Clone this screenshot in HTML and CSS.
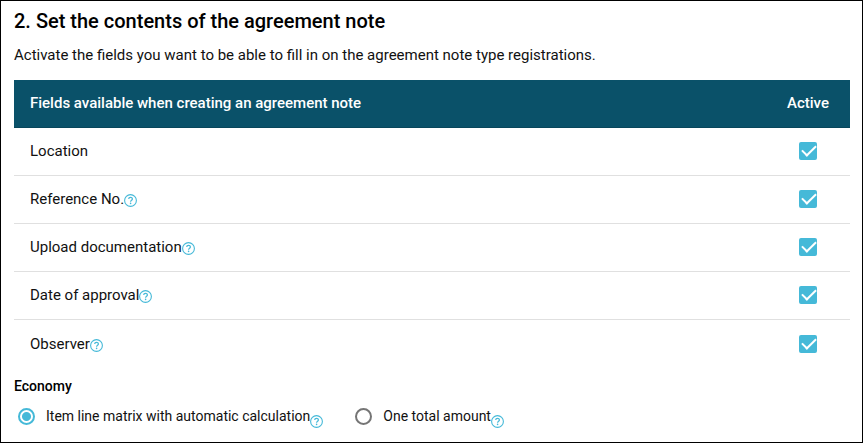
FILE: index.html
```html
<!DOCTYPE html>
<html lang="en">
<head>
  <meta charset="UTF-8">
  <meta name="viewport" content="width=device-width, initial-scale=1.0">
  <title>Agreement note settings</title>
  <link rel="stylesheet" href="styles.css">
</head>
<body>
  <!-- Help icon shared by all fields -->
  <svg class="sprite" aria-hidden="true">
    <symbol id="help" viewBox="0 0 13 13">
      <circle cx="6.5" cy="6.5" r="5.9" fill="none" stroke="currentColor" stroke-width="1.1"/>
      <path d="M4.7 5.1c0-2.3 3.7-2.3 3.7-.1 0 1.3-1.8 1.3-1.8 2.8" fill="none" stroke="currentColor" stroke-width="1.2"/>
      <circle cx="6.6" cy="9.4" r=".8" fill="currentColor"/>
    </symbol>
  </svg>

  <main class="panel">
    <h1>2. Set the contents of the agreement note</h1>
    <p class="intro">Activate the fields you want to be able to fill in on the agreement note type registrations.</p>

    <table class="fields">
      <thead>
        <tr>
          <th>Fields available when creating an agreement note</th>
          <th class="active">Active</th>
        </tr>
      </thead>
      <tbody>
        <tr>
          <td><label for="location">Location</label></td>
          <td class="active"><input type="checkbox" id="location" checked></td>
        </tr>
        <tr>
          <td><label for="reference">Reference No.</label><svg class="help"><use href="#help"/></svg></td>
          <td class="active"><input type="checkbox" id="reference" checked></td>
        </tr>
        <tr>
          <td><label for="upload">Upload documentation</label><svg class="help"><use href="#help"/></svg></td>
          <td class="active"><input type="checkbox" id="upload" checked></td>
        </tr>
        <tr>
          <td><label for="approval">Date of approval</label><svg class="help"><use href="#help"/></svg></td>
          <td class="active"><input type="checkbox" id="approval" checked></td>
        </tr>
        <tr>
          <td><label for="observer">Observer</label><svg class="help"><use href="#help"/></svg></td>
          <td class="active"><input type="checkbox" id="observer" checked></td>
        </tr>
      </tbody>
    </table>

    <!-- Economy options -->
    <fieldset class="economy">
      <legend>Economy</legend>
      <div class="options">
        <div class="option">
          <input type="radio" name="economy" id="matrix" checked>
          <label for="matrix">Item line matrix with automatic calculation</label>
          <svg class="help"><use href="#help"/></svg>
        </div>
        <div class="option">
          <input type="radio" name="economy" id="total">
          <label for="total">One total amount</label>
          <svg class="help"><use href="#help"/></svg>
        </div>
      </div>
    </fieldset>
  </main>
</body>
</html>
```
FILE: styles.css
```css
* {
  box-sizing: border-box;
}

body {
  margin: 0;
  font-family: Roboto, sans-serif;
  font-size: 14px;
  line-height: 20px;
  color: #111;
  background-color: #fff;
}

.sprite {
  display: none;
}

.panel {
  min-height: 100vh;
  padding: 8px 12px 0 13px;
  border: 1px solid #000;
}

h1 {
  margin: 0;
  font-size: 20px;
  font-weight: 500;
  line-height: 24px;
  color: #000;
}

.intro {
  margin: 12px 0 15px;
  font-size: 15px;
}

/* Fields table */
.fields {
  width: 100%;
  border-collapse: separate;
  border-spacing: 0;
  font-size: 15px;
}

.fields th,
.fields td {
  height: 48px;
  padding: 0 16px 2px;
  text-align: left;
  border-bottom: 1px solid #e0e0e0;
}

.fields th {
  font-weight: 500;
  color: #fff;
  background-color: #0a5169;
  border-bottom-color: #08465b;
}

.fields tr:last-child td {
  padding-bottom: 0;
  border-bottom: none;
}

.fields .active {
  width: 84px;
  padding-left: 0;
  padding-right: 0;
  text-align: center;
}

.help {
  flex: none;
  width: 13px;
  height: 13px;
  color: #45b9d8;
  vertical-align: -3px;
}

/* Checkboxes and radios */
input {
  appearance: none;
  flex: none;
  margin: 0;
}

input[type="checkbox"] {
  display: block;
  position: relative;
  width: 18px;
  height: 18px;
  margin: 0 auto;
  border: 2px solid #757575;
  border-radius: 2px;
}

input[type="checkbox"]:checked {
  background-color: #45b9d8;
  border-color: #45b9d8;
}

input[type="checkbox"]:checked::after {
  content: "";
  position: absolute;
  left: 1px;
  top: 1px;
  width: 12px;
  height: 6px;
  border: solid #fff;
  border-width: 0 0 2px 2px;
  transform: rotate(-45deg);
}

input[type="radio"] {
  width: 17px;
  height: 17px;
  border: 2px solid #757575;
  border-radius: 50%;
}

input[type="radio"]:checked {
  border-color: #45b9d8;
  background: radial-gradient(circle, #45b9d8 4px, #fff 5px);
}

/* Economy */
.economy {
  margin: 8px 0 0;
  padding: 0;
  border: none;
}

.economy legend {
  padding: 0;
  font-weight: 500;
  color: #000;
}

.options {
  display: flex;
  flex-wrap: wrap;
  gap: 0 32px;
  padding: 10px 4px;
}

.option {
  display: flex;
  align-items: center;
}

.option label {
  margin-left: 11px;
}

.option .help {
  align-self: flex-end;
  margin-bottom: -2px;
}
```
